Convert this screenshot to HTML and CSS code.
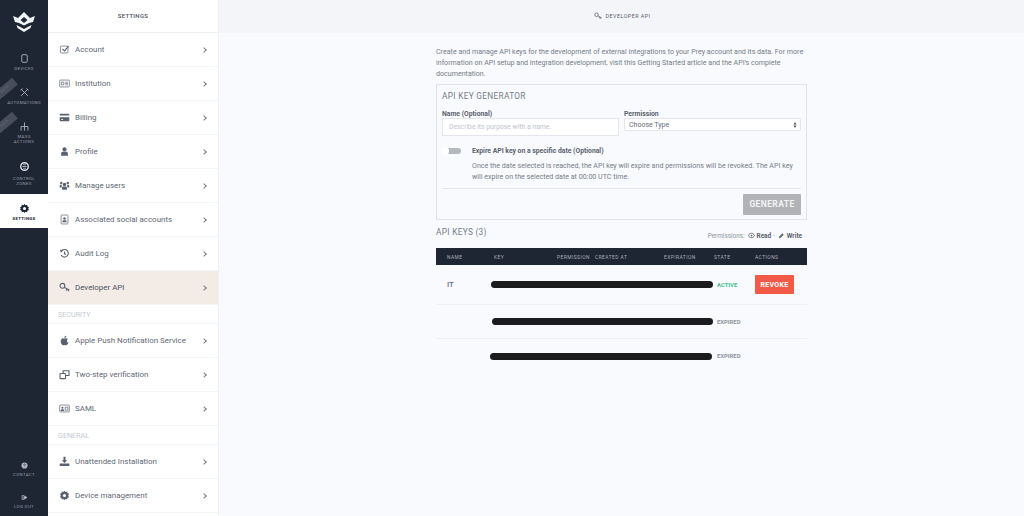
FILE: index.html
```html
<!DOCTYPE html>
<html lang="en">
<head>
<meta charset="utf-8">
<title>Developer API</title>
<link rel="stylesheet" href="styles.css">
</head>
<body>
<div class="app">
  <nav class="rail">
    <svg class="logo" viewBox="0 0 22 20"><path fill="#f2f3f5" fill-rule="evenodd" d="M0 4l5 2 3-3 3-3 3 3 3 3 5-2-2 6-4 1-5 2.500L6 11l-4-1zM11 5L7.500 8 11 11l3.500-3z"/><path fill="#f2f3f5" d="M3.500 13l7.500 4 7.500-4-1 3L11 20l-6.500-4z"/></svg>
    <a class="rail-item first"><svg viewBox="0 0 16 16"><rect x="4" y="2.500" width="8" height="11" rx="1.500" class="ol"/></svg><span>DEVICES</span></a>
    <a class="rail-item"><svg viewBox="0 0 16 16"><path class="ol" d="M3 3l10 10M13 3L3 13M2 5l3-3M11 2l3 3"/></svg><span>AUTOMATIONS</span><i class="beta">BETA</i></a>
    <a class="rail-item"><svg viewBox="0 0 16 16"><path class="ol" d="M8 2v12M3 14V8h10v6"/></svg><span>MASS<br>ACTIONS</span><i class="beta">BETA</i></a>
    <a class="rail-item zone"><svg viewBox="0 0 16 16"><circle cx="8" cy="8" r="5.500" fill="none" stroke="#dfe2e8" stroke-width="2"/><path class="ol" d="M5 8h6M6 5.500h4M6 10.500h4"/></svg><span>CONTROL<br>ZONES</span></a>
    <a class="rail-item active"><svg viewBox="0 0 16 16"><path d="M8 1.500l1.500 1.800 2.300-.6.600 2.300 2.100 1-1 2 1 2-2.100 1-.6 2.300-2.300-.6L8 14.500l-1.500-1.800-2.300.6-.6-2.300-2.100-1 1-2-1-2 2.100-1 .6-2.300 2.300.6z" fill="#1e2634"/><circle cx="8" cy="8" r="2.200" fill="#fff"/></svg><span>SETTINGS</span></a>
    <div class="rail-foot">
      <a class="rail-item small"><svg viewBox="0 0 16 16"><circle cx="8" cy="8" r="5.500" fill="#aeb3bc"/><path d="M6.500 6.800a1.500 1.500 0 1 1 2.200 1.300c-.5.300-.7.600-.7 1.200" fill="none" stroke="#1e2634" stroke-width="1.200"/></svg><span>CONTACT</span></a>
      <a class="rail-item small last"><svg viewBox="0 0 16 16"><path d="M3 4h4v1.500H4.500v5H7V12H3z" fill="#aeb3bc"/><path d="M8 6V4l5 4-5 4v-2H6V6z" fill="#aeb3bc"/></svg><span>LOG OUT</span></a>
    </div>
  </nav>

  <aside class="panel">
    <header class="panel-head">SETTINGS</header>
    <a class="row"><svg viewBox="0 0 16 16"><rect x="2" y="3" width="11" height="10" rx="1" class="dk"/><path class="dk2" d="M5 7l3 3 6-7"/></svg><span>Account</span></a>
    <a class="row"><svg viewBox="0 0 16 16"><rect x="1" y="3" width="14" height="10" rx="1" class="dk"/><path class="dk" d="M3.500 6h3.500v4H3.500zM9 6h4M9 8h4M9 10h4"/></svg><span>Institution</span></a>
    <a class="row"><svg viewBox="0 0 16 16"><path fill="#5a6270" d="M2 2.500h12a1 1 0 0 1 1 1V5H1V3.500a1 1 0 0 1 1-1zM1 7.500h14v5a1 1 0 0 1-1 1H2a1 1 0 0 1-1-1zM3 10.500v1h3v-1z"/></svg><span>Billing</span></a>
    <a class="row"><svg viewBox="0 0 16 16"><circle cx="8" cy="4.800" r="3" fill="#5a6270"/><path fill="#5a6270" d="M3 14v-2.500A3.500 3.500 0 0 1 6.500 8h3a3.500 3.500 0 0 1 3.500 3.500V14z"/></svg><span>Profile</span></a>
    <a class="row"><svg viewBox="0 0 16 16"><circle cx="8" cy="6.500" r="2.500" fill="#5a6270"/><circle cx="3.300" cy="4.500" r="1.800" fill="#5a6270"/><circle cx="12.700" cy="4.500" r="1.800" fill="#5a6270"/><path fill="#5a6270" d="M1 11V8.500a2 2 0 0 1 3-1.200V11zM15 11V8.500a2 2 0 0 0-3-1.200V11zM4.500 14v-3.500A1.500 1.500 0 0 1 6 9.500h4a1.500 1.500 0 0 1 1.500 1v3.500z"/></svg><span>Manage users</span></a>
    <a class="row"><svg viewBox="0 0 16 16"><rect x="3" y="1.500" width="10" height="13" rx="1" class="dk"/><circle cx="8" cy="6.500" r="1.800" fill="#5a6270"/><path fill="#5a6270" d="M5 12v-1.500a2 2 0 0 1 2-1.500h2a2 2 0 0 1 2 1.500V12z"/></svg><span>Associated social accounts</span></a>
    <a class="row"><svg viewBox="0 0 16 16"><path class="dk2" d="M3.500 4.500A5.500 5.500 0 1 1 3 10"/><path fill="#5a6270" d="M1.500 2.500L6.500 3 2.500 7z"/><path class="dk2" d="M8 5v3.500l2 1"/></svg><span>Audit Log</span></a>
    <a class="row current"><svg viewBox="0 0 16 16"><circle cx="5" cy="5.500" r="3.500" class="dk2"/><path class="dk2" d="M8 8l7 3.500M11.500 10l-1 2.500M14 11l-1 2.500"/></svg><span>Developer API</span></a>
    <div class="group">SECURITY</div>
    <a class="row"><svg viewBox="0 0 16 16"><path fill="#5a6270" d="M11.500 8.300c0-1.600 1.300-2.300 1.400-2.400-.8-1.100-2-1.300-2.400-1.300-1-.1-2 .6-2.500.6s-1.300-.6-2.200-.6C4.700 4.600 2.500 6 2.500 9c0 2.700 2 6 3.500 6 .8 0 1.300-.5 2.200-.5s1.300.5 2.200.5c1.400 0 2.800-2.400 3.300-3.700-1.300-.6-2.200-1.700-2.200-3zM9.800 3.300c.5-.6.800-1.400.7-2.300-.8 0-1.600.5-2.100 1.100-.5.500-.8 1.400-.7 2.200.8 0 1.600-.4 2.100-1z"/></svg><span>Apple Push Notification Service</span></a>
    <a class="row"><svg viewBox="0 0 16 16"><rect x="1.500" y="6.500" width="8" height="7.500" rx="1" class="dk2"/><path class="dk2" d="M6 6.500V2.500h8.500v7H9.500"/></svg><span>Two-step verification</span></a>
    <a class="row"><svg viewBox="0 0 16 16"><rect x="1" y="3" width="14" height="10" rx="1" class="dk"/><circle cx="5" cy="7" r="1.500" fill="#5a6270"/><path fill="#5a6270" d="M2.500 11.500V10.500a2 2 0 0 1 2-1.300h1a2 2 0 0 1 2 1.300v1z"/><path class="dk" d="M9 6h4v4.500H9z"/></svg><span>SAML</span></a>
    <div class="group">GENERAL</div>
    <a class="row"><svg viewBox="0 0 16 16"><path fill="#5a6270" d="M6.500 1h3v5H12L8 10 4 6h2.500zM1 11h14v3.500H1z"/></svg><span>Unattended Installation</span></a>
    <a class="row"><svg viewBox="0 0 16 16"><path d="M8 1l1.500 1.800 2.300-.6.600 2.300 2.100 1-1 2.500 1 2.500-2.100 1-.6 2.300-2.300-.6L8 15l-1.500-1.800-2.300.6-.6-2.300-2.100-1 1-2.500-1-2.500 2.100-1 .6-2.300 2.300.6z" fill="#5a6270"/><circle cx="8" cy="8" r="2.300" fill="#fff"/></svg><span>Device management</span></a>
  </aside>

  <main class="main">
    <header class="main-head"><svg viewBox="0 0 16 16"><circle cx="5" cy="5.500" r="3.500" class="dk2"/><path class="dk2" d="M8 8l7 3.500M11.500 10l-1 2.500M14 11l-1 2.500"/></svg><span>DEVELOPER API</span></header>
    <div class="content">
      <p class="intro">Create and manage API keys for the development of external integrations to your Prey account and its data. For more information on API setup and integration development, visit this Getting Started article and the API's complete documentation.</p>
      <section class="card">
        <h2>API KEY GENERATOR</h2>
        <div class="fields">
          <div class="field name"><label>Name (Optional)</label><div class="input">Describe its purpose with a name.</div></div>
          <div class="field"><label>Permission</label><div class="select"><span>Choose Type</span><svg viewBox="0 0 6 10"><path fill="#555" d="M3 0l2.500 4h-5zM3 10L.5 6h5z"/></svg></div></div>
        </div>
        <div class="expire">
          <div class="toggle"><i></i></div>
          <div>
            <strong>Expire API key on a specific date (Optional)</strong>
            <p>Once the date selected is reached, the API key will expire and permissions will be revoked. The API key will expire on the selected date at 00:00 UTC time.</p>
          </div>
        </div>
        <div class="actions"><button class="generate">GENERATE</button></div>
      </section>
      <div class="keys-head">
        <h2>API KEYS (3)</h2>
        <div class="legend">Permissions: <svg viewBox="0 0 16 16"><path d="M1 8c2-4 4-5 7-5s5 1 7 5c-2 4-4 5-7 5s-5-1-7-5z" fill="none" stroke="#5a6270" stroke-width="2"/><circle cx="8" cy="8" r="2" fill="#5a6270"/></svg> <b>Read</b> · <svg viewBox="0 0 16 16"><path d="M2 14l1-4 7-7 3 3-7 7z" fill="#5a6270"/></svg> <b>Write</b></div>
      </div>
      <div class="table">
        <div class="thead">
          <span class="c-name">NAME</span><span class="c-key">KEY</span><span class="c-perm">PERMISSION</span><span class="c-created">CREATED AT</span><span class="c-exp">EXPIRATION</span><span class="c-state">STATE</span><span>ACTIONS</span>
        </div>
        <div class="trow tall"><span class="rname">IT</span><i class="redact r1"></i><span class="state on">ACTIVE</span><button class="revoke">REVOKE</button></div>
        <div class="trow"><span class="rname"></span><i class="redact r2"></i><span class="state">EXPIRED</span></div>
        <div class="trow"><span class="rname"></span><i class="redact r3"></i><span class="state">EXPIRED</span></div>
      </div>
    </div>
  </main>
</div>
</body>
</html>
```
FILE: styles.css
```css
* { box-sizing: border-box; }
html, body { margin: 0; height: 100%; overflow: hidden; }
body { font-family: "Roboto", "Liberation Sans", sans-serif; color: #5a6270; background: #f9fafd; }
.app { display: flex; height: 516px; }

.rail { width: 48px; flex: none; background: #1e2634; display: flex; flex-direction: column; overflow: hidden; }
.logo { width: 22px; height: 20px; margin: 12px 13px 0; flex: none; }
.rail-item { position: relative; display: flex; flex-direction: column; align-items: center; text-align: center; font-size: 4.400px; line-height: 5.300px; letter-spacing: .3px; color: #9499a4; height: 34px; padding-top: 5px; flex: none; }
.rail-item svg { width: 11px; height: 11px; margin-bottom: 2px; }
.rail-item.first { margin-top: 16px; }
.rail-item.zone { height: 44px; padding-top: 11px; }
.rail-item.zone svg { margin-bottom: 4px; }
.rail-item.active { background: #fff; color: #1e2634; font-weight: 700; padding-top: 8.500px; }
.rail-foot { margin-top: auto; }
.rail-foot .rail-item { height: 32px; padding-top: 0; }
.rail-foot .rail-item.last { height: 23.500px; }
.rail-foot .rail-item svg { width: 9px; height: 9px; margin-bottom: 2px; }
.ol { fill: none; stroke: #b9bdc6; stroke-width: 1.200; }
.beta { position: absolute; left: -8px; top: 2.500px; width: 26px; height: 9px; background: #474d5a; transform: rotate(-40deg); font-style: normal; font-size: 3.500px; line-height: 9px; color: #6b7280; text-align: center; }

.panel { width: 171px; flex: none; background: #fff; border-right: 1px solid #eef0f3; height: 516px; overflow: hidden; }
.panel-head { height: 33px; padding-bottom: 1px; display: flex; align-items: center; justify-content: center; font-size: 6px; font-weight: 500; letter-spacing: .3px; color: #4c5360; border-bottom: 1px solid #f1f2f5; }
.row { position: relative; height: 34px; display: flex; align-items: center; padding-left: 11px; font-size: 7.950px; color: #5f6774; border-bottom: 1px solid #f4f5f7; }
.row svg { width: 11px; height: 11px; flex: none; margin-right: 5px; }
.row::after { content: ""; position: absolute; right: 12px; top: 50%; width: 3px; height: 3px; border-top: 1px solid #777d88; border-right: 1px solid #777d88; transform: translateY(-50%) rotate(45deg); }
.row.current { background: #f3ece6; color: #4c5360; }
.dk { fill: none; stroke: #5a6270; stroke-width: 1; }
.dk2 { fill: none; stroke: #5a6270; stroke-width: 1.600; }
.group { height: 19px; display: flex; align-items: center; padding-left: 10px; font-size: 7.200px; color: #c6cad2; border-bottom: 1px solid #f4f5f7; }

.main { flex: 1; min-width: 0; background: #f9fafd; }
.main-head { height: 33px; padding: 0 0 1px 1px; background: #f4f5f8; display: flex; align-items: center; justify-content: center; gap: 4px; font-size: 5.400px; letter-spacing: .45px; color: #5a6270; }
.main-head svg { width: 8px; height: 8px; }
.content { width: 371px; margin: 13px 0 0 217px; }
.intro { margin: 0 0 5px; font-size: 7.100px; line-height: 11px; color: #767d89; }
.card { height: 136px; border: 1px solid #dfe2e8; padding: 6px 5px 0 5px; }
.card h2, .keys-head h2 { margin: 0; font-weight: 400; font-size: 8.300px; line-height: 11px; letter-spacing: .3px; color: #757c88; }
.fields { display: flex; gap: 5px; margin-top: 8px; }
.field { flex: 1; min-width: 0; }
.field.name { flex: 0 0 177px; }
label { display: block; font-size: 6.800px; line-height: 8px; font-weight: 700; color: #5a6270; }
.input { height: 18px; background: #fff; border: 1px solid #e4e6eb; font-size: 6.800px; color: #c2c6cd; display: flex; align-items: center; padding-left: 6px; }
.select { height: 13px; background: #fff; border: 1px solid #e4e6eb; border-radius: 2px; font-size: 7px; color: #666d79; display: flex; align-items: center; justify-content: space-between; padding: 0 3px 0 4px; }
.select svg { width: 4px; height: 6px; }
.expire { display: flex; margin-top: 11px; padding-bottom: 6px; border-bottom: 1px solid #e4e6eb; }
.toggle { width: 19px; height: 6px; margin-right: 11px; position: relative; background: #b4b8c1; border-radius: 3px; flex: none; margin-top: 1px; }
.toggle i { position: absolute; left: -1px; top: -1px; width: 8px; height: 8px; border-radius: 50%; background: #fff; }
.expire strong { display: block; font-size: 6.800px; line-height: 9px; color: #5a6270; }
.expire p { margin: 4px 0 0; max-width: 322px; font-size: 7.100px; line-height: 11px; color: #767d89; }
.actions { display: flex; justify-content: flex-end; margin-top: 5px; }
.generate { width: 58px; height: 20.500px; border: 0; border-radius: 1px; background: #b1b3b6; color: #f2f3f4; font-family: "Roboto", sans-serif; font-size: 8.500px; font-weight: 700; letter-spacing: .4px; padding: 0; }

.keys-head { display: flex; justify-content: space-between; align-items: flex-end; margin-top: 7px; height: 15px; padding-right: 5px; }
.keys-head h2 { align-self: flex-start; }
.legend { font-size: 6.400px; line-height: 8px; color: #8f95a0; display: flex; align-items: center; gap: 2px; margin-bottom: 2.500px; }
.legend svg { width: 7px; height: 7px; margin-left: 1px; }
.legend b { color: #5a6270; font-weight: 700; }

.table { margin-top: 6px; }
.thead { height: 17px; background: #1e2634; display: flex; align-items: center; font-size: 4.900px; letter-spacing: .45px; color: #a9aeb8; white-space: nowrap; }
.thead span { flex: none; }
.c-name { width: 58px; padding-left: 11px; }
.c-key { width: 63px; }
.c-perm { width: 38px; }
.c-created { width: 69px; }
.c-exp { width: 50px; }
.c-state { width: 41px; }
.trow { height: 34px; display: flex; align-items: center; border-bottom: 1px solid #eef0f3; }
.trow.tall { height: 40px; }
.trow:last-child { border-bottom: 0; }
.rname { width: 45px; padding-left: 11px; font-size: 7.800px; font-weight: 500; color: #6a717d; flex: none; }
.redact { display: block; height: 7px; background: #1c1c1e; border-radius: 4px; flex: none; }
.r1 { width: 222px; margin: 0 4px 0 10px; }
.r2 { width: 221px; margin: 0 4px 0 11px; }
.r3 { width: 222px; margin: 0 5px 0 9px; }
.state { width: 38px; flex: none; font-size: 5.900px; font-weight: 700; color: #8f95a0; }
.state.on { color: #3cbf92; }
.revoke { width: 39px; height: 19px; border: 0; border-radius: 1px; background: #f05a46; color: #fff; font-family: "Roboto", sans-serif; font-size: 7px; font-weight: 700; letter-spacing: .3px; padding: 0; }
```
